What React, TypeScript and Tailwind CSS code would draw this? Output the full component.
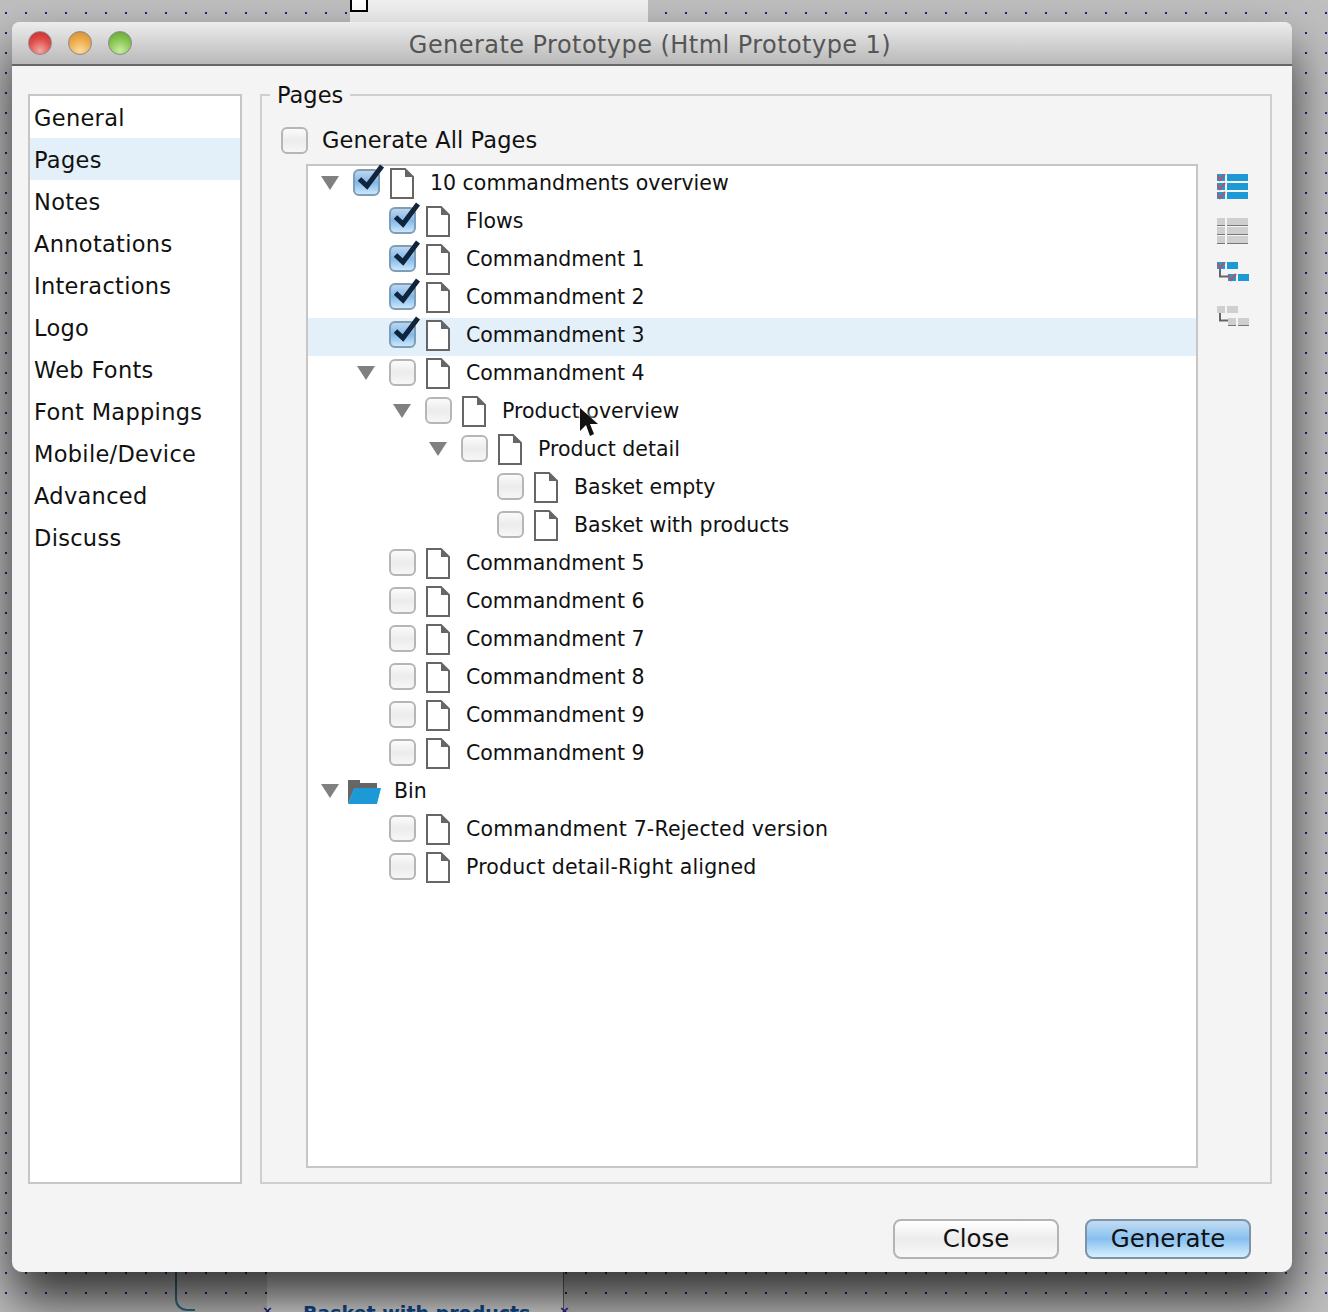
const sections = [
  "General",
  "Pages",
  "Notes",
  "Annotations",
  "Interactions",
  "Logo",
  "Web Fonts",
  "Font Mappings",
  "Mobile/Device",
  "Advanced",
  "Discuss",
];

type Row = {
  label: string;
  level: 0 | 1 | 2 | 3 | 4;
  open?: boolean;
  checked?: boolean;
  selected?: boolean;
  folder?: boolean;
};

const rows: Row[] = [
  { label: "10 commandments overview", level: 0, open: true, checked: true },
  { label: "Flows", level: 1, checked: true },
  { label: "Commandment 1", level: 1, checked: true },
  { label: "Commandment 2", level: 1, checked: true },
  { label: "Commandment 3", level: 1, checked: true, selected: true },
  { label: "Commandment 4", level: 1, open: true },
  { label: "Product overview", level: 2, open: true },
  { label: "Product detail", level: 3, open: true },
  { label: "Basket empty", level: 4 },
  { label: "Basket with products", level: 4 },
  { label: "Commandment 5", level: 1 },
  { label: "Commandment 6", level: 1 },
  { label: "Commandment 7", level: 1 },
  { label: "Commandment 8", level: 1 },
  { label: "Commandment 9", level: 1 },
  { label: "Commandment 9", level: 1 },
  { label: "Bin", level: 0, open: true, folder: true },
  { label: "Commandment 7-Rejected version", level: 1 },
  { label: "Product detail-Right aligned", level: 1 },
];

const indent = ["pl-[13px]", "pl-[49px]", "pl-[85px]", "pl-[121px]", "pl-[157px]"];

function Checkbox({ checked }: { checked?: boolean }) {
  if (checked) {
    return (
      <div className="relative h-[27px] w-[27px] shrink-0 rounded-[6px] border-2 border-[#7f9db5] bg-gradient-to-b from-[#bcd6ee] via-[#80b8ea] to-[#cbe7fb]">
        <svg className="absolute left-[3px] top-[-7px]" width="26" height="28" viewBox="0 0 26 28">
          <path d="M1.5 15 L9 22 L24 2" fill="none" stroke="#10243c" strokeWidth="5" />
        </svg>
      </div>
    );
  }
  return (
    <div className="h-[27px] w-[27px] shrink-0 rounded-[6px] border-2 border-[#b6b6b6] bg-gradient-to-b from-[#fbfbfb] via-[#ececec] to-[#f6f6f6]" />
  );
}

function PageIcon() {
  return (
    <svg className="mt-[2px] shrink-0" width="24" height="31" viewBox="0 0 24 31">
      <path d="M1 1 H15 L23 9 V30 H1 Z" fill="#fff" stroke="#666" strokeWidth="2" />
      <path d="M15 1 L23 9 H15 Z" fill="#666" />
    </svg>
  );
}

function FolderIcon() {
  return (
    <svg className="shrink-0" width="33" height="25" viewBox="0 0 33 25">
      <path d="M0 0 H12 V3 H29 V9 H6 L0 24 Z" fill="#666" />
      <path d="M6 8 H33 L29 24 H0 Z" fill="#1d9ad6" />
    </svg>
  );
}

function ToolIcon({ kind, on }: { kind: "list" | "tree"; on?: boolean }) {
  const bar = on ? "#1d9ad6" : "#cfcfcf";
  const tick = on ? "#b0566a" : "#cfcfcf";
  if (kind === "list") {
    return (
      <svg width="32" height="26" viewBox="0 0 32 26">
        {[0, 9, 18].map((y) => (
          <g key={y}>
            <rect x="0" y={y} width="8" height="7" fill={bar} />
            {on && <path d={`M0 ${y + 1} L3 ${y + 6} L8 ${y}`} fill="none" stroke={tick} strokeWidth="2" />}
            <rect x="10" y={y} width="21" height="7" fill={bar} />
            {!on && <rect x="0" y={y + 7} width="8" height="1" fill="#777" />}
            {!on && <rect x="10" y={y + 7} width="21" height="1" fill="#777" />}
          </g>
        ))}
      </svg>
    );
  }
  return (
    <svg width="32" height="26" viewBox="0 0 32 26">
      <path d="M3 6 V14.5 H13" fill="none" stroke="#666" strokeWidth="2" />
      <rect x="0" y="0" width="8" height="7" fill={bar} />
      <rect x="10" y="0" width="11" height="7" fill={bar} />
      <rect x="11" y="12" width="8" height="7" fill={bar} />
      <rect x="21" y="12" width="11" height="7" fill={bar} />
      {on && (
        <>
          <path d="M0 1 L3 6 L8 0" fill="none" stroke={tick} strokeWidth="2" />
          <path d="M11 13 L14 18 L19 12" fill="none" stroke={tick} strokeWidth="2" />
        </>
      )}
      {!on && (
        <>
          <rect x="11" y="19" width="8" height="1" fill="#777" />
          <rect x="21" y="19" width="11" height="1" fill="#777" />
        </>
      )}
    </svg>
  );
}

function TrafficLight({ color }: { color: string }) {
  return <div className={`h-6 w-6 rounded-full border border-[#8a8a8a] ${color}`} />;
}

export default function App() {
  return (
    <div
      className="relative h-[1312px] w-[1328px] overflow-hidden bg-[#bfbfbf] bg-[radial-gradient(circle,#20208a_1px,transparent_1.4px)] bg-[size:20px_20px] bg-[position:-4px_3px] pl-[12px] pt-[22px] text-[#111]"
      style={{ fontFamily: '"DejaVu Sans", sans-serif' }}
    >
      {/* canvas nodes behind the dialog */}
      <div className="absolute left-[350px] top-0 h-[24px] w-[298px] bg-[#f1f1f1]" />
      <div className="absolute left-[350px] top-[-4px] h-[16px] w-[18px] border-2 border-black bg-white" />
      <div className="absolute left-[267px] top-[1262px] h-[60px] w-[297px] border-r border-[#666] bg-[#dcdcdc]">
        <div className="pl-[36px] pt-[37px] text-[19px] font-bold text-[#0f4c8f]">Basket with products</div>
      </div>
      <div className="absolute left-[175px] top-[1262px] h-[49px] w-[20px] rounded-bl-[12px] border-b-2 border-l-2 border-[#2d6f84]" />
      <div className="absolute left-[262px] top-[1304px] text-[13px] font-bold leading-[13px] text-[#20208a]">×</div>
      <div className="absolute left-[559px] top-[1304px] text-[13px] font-bold leading-[13px] text-[#20208a]">×</div>

      <div className="relative flex h-[1250px] w-[1280px] flex-col rounded-t-[8px] rounded-b-[10px] bg-[#f4f4f4] shadow-[0_28px_50px_rgba(0,0,0,0.74)]">
        <div className="flex h-[44px] shrink-0 items-center rounded-t-[8px] border-b-2 border-[#666] bg-gradient-to-b from-[#ededed] to-[#b9b9b9] pl-[16px]">
          <div className="flex gap-4">
            <TrafficLight color="bg-[radial-gradient(circle_at_50%_85%,#f0a8a0,#e04a48_55%,#c02c2c)]" />
            <TrafficLight color="bg-[radial-gradient(circle_at_50%_85%,#fbdca0,#eda94a_55%,#d08a2c)]" />
            <TrafficLight color="bg-[radial-gradient(circle_at_50%_85%,#c8eca0,#85c450_55%,#5e9e34)]" />
          </div>
          <div className="flex-1 pr-[124px] pt-[3px] text-center text-[24px] tracking-[0.45px] text-[#555]">
            Generate Prototype (Html Prototype 1)
          </div>
        </div>

        <div className="flex flex-1 gap-[18px] px-[16px] pt-[28px]">
          <div className="h-[1090px] w-[214px] shrink-0 border-2 border-[#c6c6c6] bg-white">
            {sections.map((s) => (
              <div
                key={s}
                className={`flex h-[42px] items-center pl-[4px] pt-[3px] text-[22.5px] tracking-[0.3px] ${s === "Pages" ? "bg-[#e3f0fa]" : ""}`}
              >
                {s}
              </div>
            ))}
          </div>

          <div className="relative flex h-[1090px] w-[1012px] flex-col border-2 border-[#cfcfcf] pl-[19px] pt-[31px]">
            <div className="absolute left-[8px] top-[-15px] bg-[#f4f4f4] px-[7px] text-[22.5px] leading-[28px]">
              Pages
            </div>
            <div className="flex h-[37px] items-start gap-[14px]">
              <Checkbox />
              <span className="text-[22.5px] leading-[26px] tracking-[0.1px]">Generate All Pages</span>
            </div>
            <div className="flex">
              <div className="ml-[25px] h-[1004px] w-[892px] border-2 border-[#c6c6c6] bg-white">
                {rows.map((r, i) => (
                  <div
                    key={i}
                    className={`flex h-[38px] items-start ${indent[r.level]} ${r.selected ? "bg-[#e3f0fa]" : ""}`}
                  >
                    <div className={`mt-[10px] h-[14px] w-[18px] shrink-0 ${r.folder ? "mr-[9px]" : "mr-[14px]"}`}>
                      {r.open && (
                        <svg width="18" height="14" viewBox="0 0 18 14">
                          <path d="M0 0 H18 L9 14 Z" fill="#808080" />
                        </svg>
                      )}
                    </div>
                    {r.folder ? (
                      <div className="mr-[13px] mt-[6px]">
                        <FolderIcon />
                      </div>
                    ) : (
                      <div className="mr-[10px] mt-[3px]">
                        <Checkbox checked={r.checked} />
                      </div>
                    )}
                    {!r.folder && <PageIcon />}
                    <span
                      className={`text-[20.5px] leading-[34px] ${r.folder ? "" : "ml-[16px]"} ${r.label.includes("-") ? "tracking-[0.18px]" : ""}`}
                    >
                      {r.label}
                    </span>
                  </div>
                ))}
              </div>
              <div className="ml-[19px] flex flex-col gap-[18px] pt-[10px]">
                <ToolIcon kind="list" on />
                <ToolIcon kind="list" />
                <ToolIcon kind="tree" on />
                <ToolIcon kind="tree" />
              </div>
            </div>
          </div>
        </div>

        <div className="flex h-[88px] shrink-0 justify-end gap-[26px] pr-[41px] pt-[35px]">
          <button
            type="button"
            className="h-[40px] w-[166px] rounded-[8px] border-2 border-[#b4b4b4] bg-gradient-to-b from-[#ffffff] via-[#ececec] to-[#f8f8f8] text-[24.5px]"
          >
            Close
          </button>
          <button
            type="button"
            className="h-[40px] w-[166px] rounded-[8px] border-2 border-[#7d93a8] bg-gradient-to-b from-[#c4dcf2] via-[#86c0ef] to-[#d6effd] text-[24.5px]"
          >
            Generate
          </button>
        </div>
      </div>

      {/* mouse pointer */}
      <svg className="absolute left-[576px] top-[405px] drop-shadow-[0_0_3px_rgba(255,255,255,0.9)]" width="26" height="34" viewBox="0 0 26 34">
        <path d="M4 3 V26 L10 20 L14 31 L18 29 L14 19 L22 19 Z" fill="#111" />
      </svg>
    </div>
  );
}
